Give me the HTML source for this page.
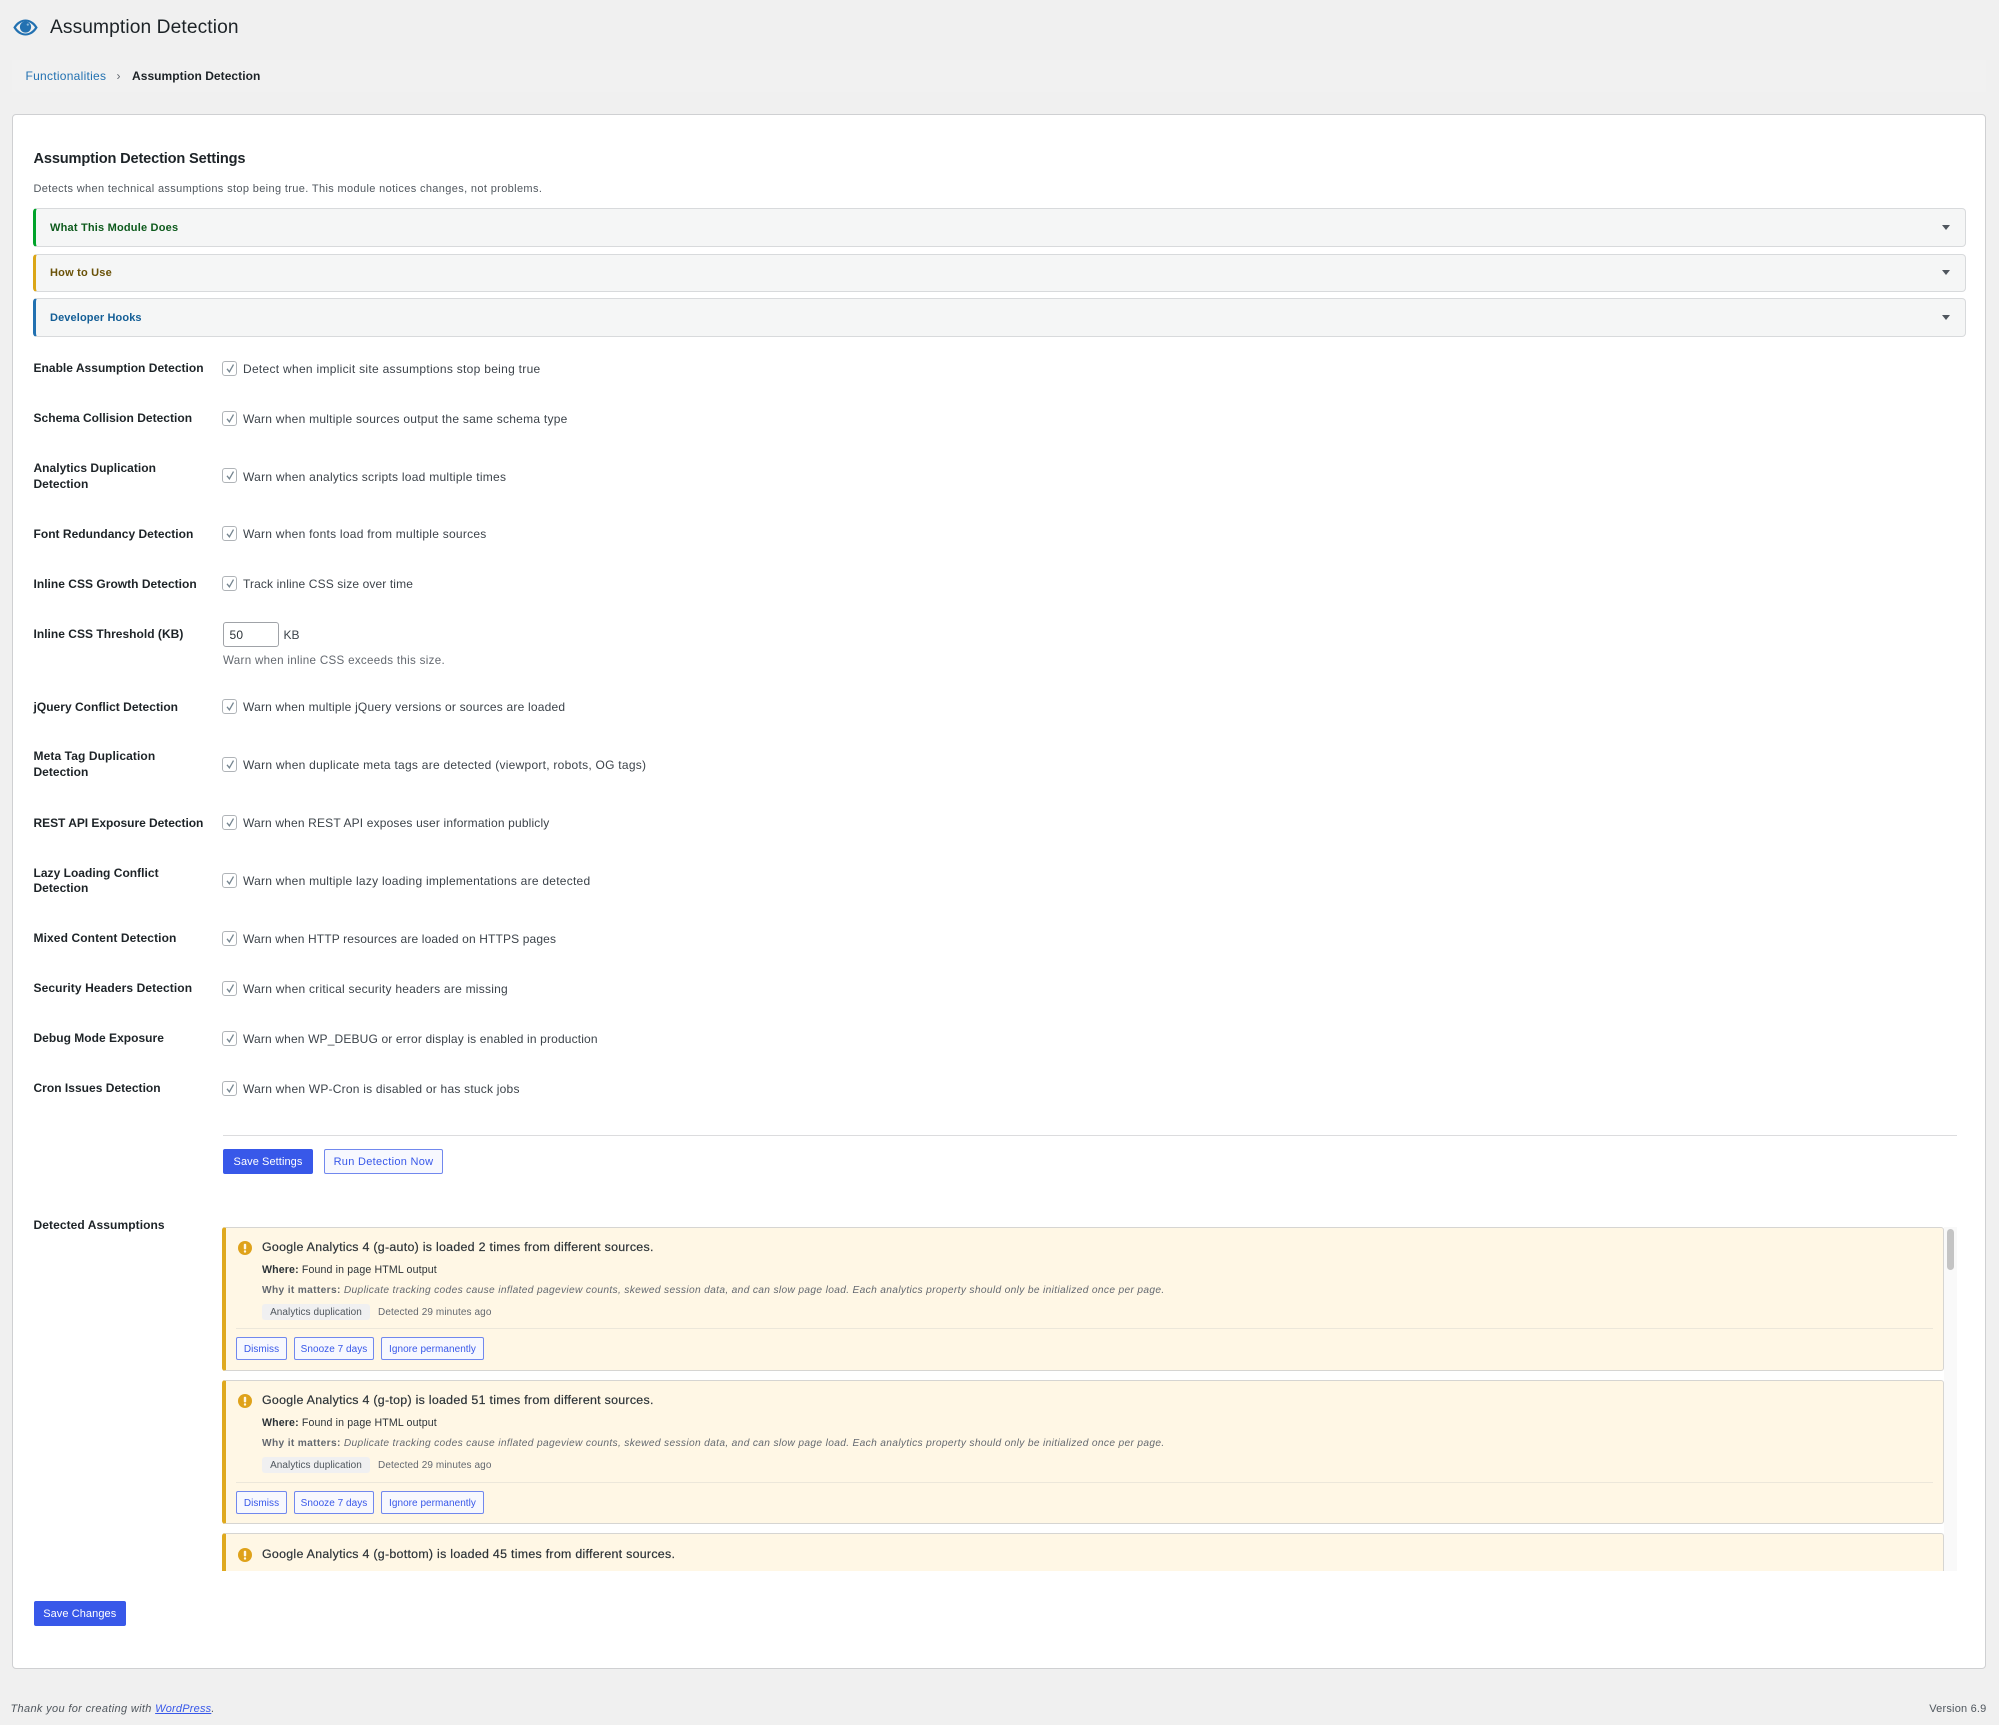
<!DOCTYPE html>
<html lang="en"><head><meta charset="utf-8"><title>Assumption Detection</title>
<style>
*{box-sizing:border-box}
html,body{margin:0;padding:0}
body{position:relative;width:1999px;height:1725px;overflow:hidden;background:#f0f0f0;font-family:"Liberation Sans",sans-serif;color:#3c434a;font-size:12px;filter:blur(.35px)}
.a,.t{position:absolute}
.t{white-space:nowrap;line-height:16px}
a{color:#2271b1;text-decoration:none}
.card{left:12px;top:114px;width:1974px;height:1555px;background:#fff;border:1px solid #cfd0d2;border-radius:4px}
.acc{left:33px;width:1933px;height:39px;background:#f5f6f6;border:1px solid #d8dadc;border-left-width:3px;border-radius:4px}
.acct{left:50px;font-weight:700;font-size:11px;letter-spacing:.2px}
.arr{left:1942px;width:0;height:0;border-left:4px solid transparent;border-right:4px solid transparent;border-top:5px solid #50575e}
.lb{left:33.500px;font-weight:700;font-size:12px;color:#1d2327;letter-spacing:.02px}
.cl{left:243px;font-size:12px;color:#3c434a}
.cb{left:222px;width:15px;height:15px;border:1px solid #b0b4b8;border-radius:3px;background:#fff}
.cb svg{position:absolute;left:1px;top:0;width:12px;height:13px}
.btn{height:25px;border-radius:2px;line-height:25px;text-align:center;font-size:11px;white-space:nowrap;border:1px solid #3858e9;letter-spacing:.08px}
.pri{background:#3858e9;color:#fff}
.sec{background:#f7f8fe;color:#3858e9;border-color:#7188ee;letter-spacing:.3px}
.nt{left:222px;width:1722px;background:#fff7e5;border:1px solid #d6d5d2;border-left:4px solid #dfa91f;border-radius:3px}
.ntt{left:262px;font-size:12.400px;color:#2c3338;letter-spacing:.28px;-webkit-text-stroke:.2px #2c3338}
.wh{left:262px;font-size:10.600px;color:#2c3338;letter-spacing:.14px}
.why{left:262px;font-size:10.200px;color:#646970;letter-spacing:.34px}
.tag{left:262px;width:108px;height:16px;background:#f0f0f1;border-radius:3px;font-size:10px;line-height:17px;text-align:center;color:#50575e;letter-spacing:.06px}
.det{left:378px;font-size:10px;color:#646970;letter-spacing:.1px}
.div{left:236px;width:1697px;height:1px;background:#ece7da}
.sb{height:23px;border:1px solid #7188ee;border-radius:2px;background:#f7f8fe;color:#3858e9;font-size:10px;line-height:23px;text-align:center;white-space:nowrap;letter-spacing:.04px}
.ic{left:238px;width:14px;height:14px}
</style></head><body>

<svg class="a" style="left:13px;top:14.500px;width:25px;height:25px" viewBox="0 0 25 25"><path fill="#2271b1" fill-rule="evenodd" d="M.3 12.500C3.500 7 8 4.500 12.500 4.500S21.500 7 24.700 12.500C21.500 18 17 20.500 12.500 20.500S3.500 18 .3 12.500zM3 12.500C5.500 16.200 9 18.500 12.500 18.500S19.500 16.200 22 12.500C19.500 8.800 16 6.500 12.500 6.500S5.500 8.800 3 12.500z"/><circle cx="12.500" cy="12" r="5.600" fill="#2271b1"/><circle cx="14.800" cy="9.600" r="1.100" fill="#8db8d8"/></svg>
<div class="t" style="left:50px;top:16px;font-size:19.200px;line-height:24px;color:#1d2327;letter-spacing:.1px">Assumption Detection</div>

<div class="a" style="left:12px;top:60px;width:1974px;height:32px;background:#f1f1f1"></div>
<a class="t" style="left:25.500px;top:68px;font-size:12px;letter-spacing:.27px">Functionalities</a>
<div class="t" style="left:116.500px;top:68px;font-size:12px;color:#646970">›</div>
<div class="t" style="left:132px;top:68px;font-size:12px;font-weight:700;color:#1d2327;letter-spacing:.05px">Assumption Detection</div>

<div class="a card"></div>
<div class="t" style="left:33.500px;top:150px;font-size:14.600px;font-weight:700;color:#1d2327;line-height:18px;letter-spacing:-.16px">Assumption Detection Settings</div>
<div class="t" style="left:33.500px;top:181px;font-size:11px;color:#50575e;letter-spacing:.36px">Detects when technical assumptions stop being true. This module notices changes, not problems.</div>

<div class="a acc" style="top:208px;border-left-color:#00a32a"></div>
<div class="t acct" style="top:220px;color:#0d5a1c">What This Module Does</div>
<div class="a arr" style="top:225px"></div>
<div class="a acc" style="top:253.500px;height:38px;border-left-color:#dba617"></div>
<div class="t acct" style="top:265px;color:#6a5208">How to Use</div>
<div class="a arr" style="top:270px"></div>
<div class="a acc" style="top:298px;border-left-color:#2271b1"></div>
<div class="t acct" style="top:310px;color:#135e96;letter-spacing:.12px">Developer Hooks</div>
<div class="a arr" style="top:315px"></div>

<div class="t lb" style="top:360px">Enable Assumption Detection</div>
<div class="a cb" style="top:361px"><svg viewBox="0 0 12 13"><path d="M3 6.800 5.400 9.800 9.500 2.600" fill="none" stroke="#74848f" stroke-width="1.300"/></svg></div>
<div class="t cl" style="top:361px;letter-spacing:.29px">Detect when implicit site assumptions stop being true</div>

<div class="t lb" style="top:410px">Schema Collision Detection</div>
<div class="a cb" style="top:411px"><svg viewBox="0 0 12 13"><path d="M3 6.800 5.400 9.800 9.500 2.600" fill="none" stroke="#74848f" stroke-width="1.300"/></svg></div>
<div class="t cl" style="top:411px;letter-spacing:.25px">Warn when multiple sources output the same schema type</div>

<div class="t lb" style="top:460px">Analytics Duplication</div>
<div class="t lb" style="top:476px">Detection</div>
<div class="a cb" style="top:468px"><svg viewBox="0 0 12 13"><path d="M3 6.800 5.400 9.800 9.500 2.600" fill="none" stroke="#74848f" stroke-width="1.300"/></svg></div>
<div class="t cl" style="top:468.500px;letter-spacing:.26px">Warn when analytics scripts load multiple times</div>

<div class="t lb" style="top:526px">Font Redundancy Detection</div>
<div class="a cb" style="top:526px"><svg viewBox="0 0 12 13"><path d="M3 6.800 5.400 9.800 9.500 2.600" fill="none" stroke="#74848f" stroke-width="1.300"/></svg></div>
<div class="t cl" style="top:526px;letter-spacing:.25px">Warn when fonts load from multiple sources</div>

<div class="t lb" style="top:576px">Inline CSS Growth Detection</div>
<div class="a cb" style="top:576px"><svg viewBox="0 0 12 13"><path d="M3 6.800 5.400 9.800 9.500 2.600" fill="none" stroke="#74848f" stroke-width="1.300"/></svg></div>
<div class="t cl" style="top:576px;letter-spacing:.12px">Track inline CSS size over time</div>

<div class="t lb" style="top:626px">Inline CSS Threshold (KB)</div>
<div class="a" style="left:223px;top:622px;width:56px;height:25px;border:1px solid #a0a3a8;border-radius:3px;background:#fff"></div>
<div class="t" style="left:229.500px;top:626.500px;font-size:12px;color:#2c3338;letter-spacing:.2px">50</div>
<div class="t" style="left:283.500px;top:626.500px;font-size:12px;color:#3c434a">KB</div>
<div class="t" style="left:223px;top:652.500px;font-size:11.600px;color:#646970;letter-spacing:.3px">Warn when inline CSS exceeds this size.</div>

<div class="t lb" style="top:699px">jQuery Conflict Detection</div>
<div class="a cb" style="top:699px"><svg viewBox="0 0 12 13"><path d="M3 6.800 5.400 9.800 9.500 2.600" fill="none" stroke="#74848f" stroke-width="1.300"/></svg></div>
<div class="t cl" style="top:699px;letter-spacing:.2px">Warn when multiple jQuery versions or sources are loaded</div>

<div class="t lb" style="top:748px;letter-spacing:.1px">Meta Tag Duplication</div>
<div class="t lb" style="top:764px">Detection</div>
<div class="a cb" style="top:757px"><svg viewBox="0 0 12 13"><path d="M3 6.800 5.400 9.800 9.500 2.600" fill="none" stroke="#74848f" stroke-width="1.300"/></svg></div>
<div class="t cl" style="top:757px;letter-spacing:.26px">Warn when duplicate meta tags are detected (viewport, robots, OG tags)</div>

<div class="t lb" style="top:814.500px;letter-spacing:-.04px">REST API Exposure Detection</div>
<div class="a cb" style="top:815px"><svg viewBox="0 0 12 13"><path d="M3 6.800 5.400 9.800 9.500 2.600" fill="none" stroke="#74848f" stroke-width="1.300"/></svg></div>
<div class="t cl" style="top:815px;letter-spacing:.16px">Warn when REST API exposes user information publicly</div>

<div class="t lb" style="top:864.500px">Lazy Loading Conflict</div>
<div class="t lb" style="top:880px">Detection</div>
<div class="a cb" style="top:873px"><svg viewBox="0 0 12 13"><path d="M3 6.800 5.400 9.800 9.500 2.600" fill="none" stroke="#74848f" stroke-width="1.300"/></svg></div>
<div class="t cl" style="top:873px;letter-spacing:.25px">Warn when multiple lazy loading implementations are detected</div>

<div class="t lb" style="top:930px;letter-spacing:.1px">Mixed Content Detection</div>
<div class="a cb" style="top:931px"><svg viewBox="0 0 12 13"><path d="M3 6.800 5.400 9.800 9.500 2.600" fill="none" stroke="#74848f" stroke-width="1.300"/></svg></div>
<div class="t cl" style="top:931px;letter-spacing:.14px">Warn when HTTP resources are loaded on HTTPS pages</div>

<div class="t lb" style="top:980px;letter-spacing:.1px">Security Headers Detection</div>
<div class="a cb" style="top:981px"><svg viewBox="0 0 12 13"><path d="M3 6.800 5.400 9.800 9.500 2.600" fill="none" stroke="#74848f" stroke-width="1.300"/></svg></div>
<div class="t cl" style="top:981px;letter-spacing:.24px">Warn when critical security headers are missing</div>

<div class="t lb" style="top:1030px">Debug Mode Exposure</div>
<div class="a cb" style="top:1031px"><svg viewBox="0 0 12 13"><path d="M3 6.800 5.400 9.800 9.500 2.600" fill="none" stroke="#74848f" stroke-width="1.300"/></svg></div>
<div class="t cl" style="top:1031px;letter-spacing:.15px">Warn when WP_DEBUG or error display is enabled in production</div>

<div class="t lb" style="top:1080px">Cron Issues Detection</div>
<div class="a cb" style="top:1081px"><svg viewBox="0 0 12 13"><path d="M3 6.800 5.400 9.800 9.500 2.600" fill="none" stroke="#74848f" stroke-width="1.300"/></svg></div>
<div class="t cl" style="top:1081px;letter-spacing:.22px">Warn when WP-Cron is disabled or has stuck jobs</div>

<div class="a" style="left:223px;top:1135px;width:1734px;height:1px;background:#dcdcde"></div>
<div class="a btn pri" style="left:223px;top:1149px;width:90px">Save Settings</div>
<div class="a btn sec" style="left:324px;top:1149px;width:119px">Run Detection Now</div>

<div class="t lb" style="top:1217px;letter-spacing:.08px">Detected Assumptions</div>

<div class="a" style="left:1944px;top:1227px;width:13px;height:344px;background:#f9f9f9"></div>
<div class="a" style="left:1947px;top:1229px;width:7px;height:41px;background:#c4c4c4;border-radius:3.500px"></div>

<div class="a nt" style="top:1227px;height:144px"></div>
<svg class="a ic" style="top:1241px" viewBox="0 0 14 14"><circle cx="7" cy="7" r="7" fill="#dfa21a"/><rect x="5.800" y="2.800" width="2.400" height="5.600" rx=".9" fill="#fff7e5"/><circle cx="7" cy="10.500" r="1.200" fill="#fff7e5"/></svg>
<div class="t ntt" style="top:1239px">Google Analytics 4 (g-auto) is loaded 2 times from different sources.</div>
<div class="t wh" style="top:1261.500px"><b>Where:</b> Found in page HTML output</div>
<div class="t why" style="top:1282.500px"><b>Why it matters:</b> <i>Duplicate tracking codes cause inflated pageview counts, skewed session data, and can slow page load. Each analytics property should only be initialized once per page.</i></div>
<div class="a tag" style="top:1304px">Analytics duplication</div>
<div class="t det" style="top:1304.500px">Detected 29 minutes ago</div>
<div class="a div" style="top:1328px"></div>
<div class="a sb" style="left:236px;top:1337px;width:51px">Dismiss</div>
<div class="a sb" style="left:294px;top:1337px;width:80px">Snooze 7 days</div>
<div class="a sb" style="left:381px;top:1337px;width:103px">Ignore permanently</div>

<div class="a nt" style="top:1380px;height:144px"></div>
<svg class="a ic" style="top:1394px" viewBox="0 0 14 14"><circle cx="7" cy="7" r="7" fill="#dfa21a"/><rect x="5.800" y="2.800" width="2.400" height="5.600" rx=".9" fill="#fff7e5"/><circle cx="7" cy="10.500" r="1.200" fill="#fff7e5"/></svg>
<div class="t ntt" style="top:1392px">Google Analytics 4 (g-top) is loaded 51 times from different sources.</div>
<div class="t wh" style="top:1414.500px"><b>Where:</b> Found in page HTML output</div>
<div class="t why" style="top:1435.500px"><b>Why it matters:</b> <i>Duplicate tracking codes cause inflated pageview counts, skewed session data, and can slow page load. Each analytics property should only be initialized once per page.</i></div>
<div class="a tag" style="top:1457px">Analytics duplication</div>
<div class="t det" style="top:1457.500px">Detected 29 minutes ago</div>
<div class="a div" style="top:1482px"></div>
<div class="a sb" style="left:236px;top:1491px;width:51px">Dismiss</div>
<div class="a sb" style="left:294px;top:1491px;width:80px">Snooze 7 days</div>
<div class="a sb" style="left:381px;top:1491px;width:103px">Ignore permanently</div>

<div class="a nt" style="top:1533px;height:38px;border-bottom:0;border-radius:3px 3px 0 0"></div>
<svg class="a ic" style="top:1548px" viewBox="0 0 14 14"><circle cx="7" cy="7" r="7" fill="#dfa21a"/><rect x="5.800" y="2.800" width="2.400" height="5.600" rx=".9" fill="#fff7e5"/><circle cx="7" cy="10.500" r="1.200" fill="#fff7e5"/></svg>
<div class="t ntt" style="top:1545.500px">Google Analytics 4 (g-bottom) is loaded 45 times from different sources.</div>

<div class="a btn pri" style="left:33.500px;top:1601px;width:92.500px">Save Changes</div>

<div class="t" style="left:10.500px;top:1701px;font-size:11px;font-style:italic;color:#50575e;letter-spacing:.34px">Thank you for creating with <a style="color:#3858e9;text-decoration:underline;letter-spacing:.2px">WordPress</a>.</div>
<div class="t" style="right:12.500px;top:1701px;font-size:11px;color:#50575e;letter-spacing:.2px">Version 6.9</div>
</body></html>
